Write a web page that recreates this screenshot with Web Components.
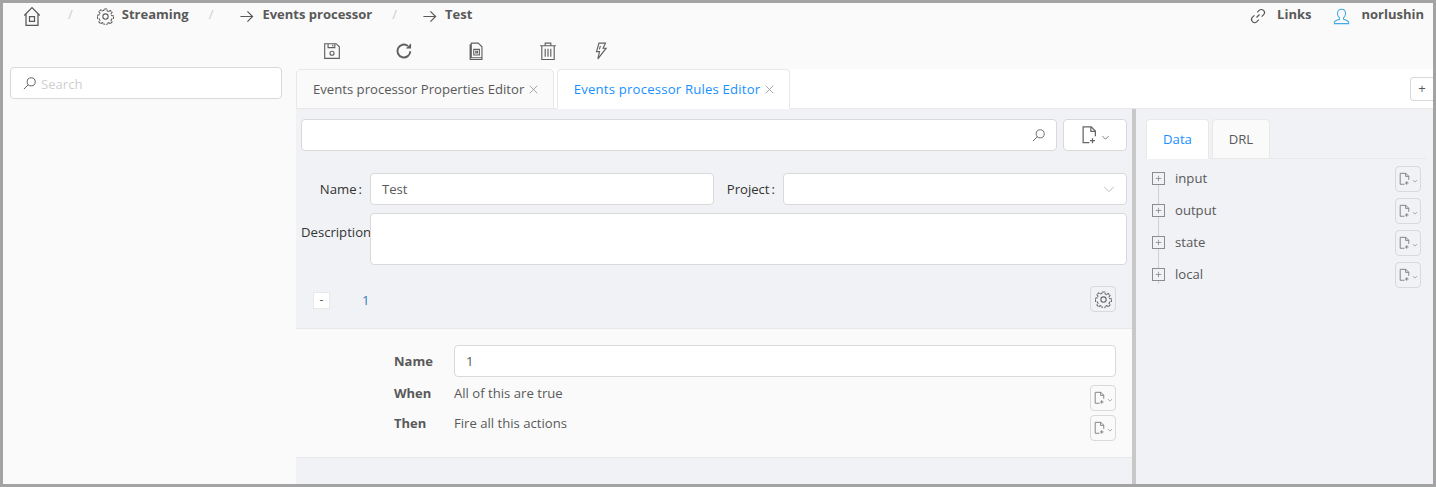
<!DOCTYPE html>
<html>
<head>
<meta charset="utf-8">
<title>Events processor</title>
<style>
    html, body { margin: 0; height: 100%; }
    body { font-family: "Open Sans", "Noto Sans", sans-serif; font-size: 13.13px; color: #595959; }
</style>
</head>
<body>

<app-shell>
    <nav-bar slot="nav"></nav-bar>
    <tool-bar slot="tools"></tool-bar>
    <search-side slot="side"></search-side>
    <tab-strip slot="tabs"></tab-strip>
    <rule-editor slot="editor"></rule-editor>
    <data-panel slot="panel"></data-panel>
</app-shell>

<script>
// shared icons, all drawn on a 16 box
const ICONS = {
    home: `<path d="M1.800 7.600 8 1.300l6.200 6.300M3.200 6.500v9h9.600v-9M6 8.500h4v3.800H6z"/>`,
    gear: `<circle cx="8" cy="8" r="2.500"/><path d="M6.800 1h2.400l.4 1.800 1.400.6 1.500-1 1.700 1.700-1 1.500.6 1.400 1.800.4v2.400l-1.800.4-.6 1.400 1 1.500-1.700 1.700-1.500-1-1.400.6-.4 1.800H6.800l-.4-1.800-1.400-.6-1.500 1-1.700-1.700 1-1.500-.6-1.400-1.800-.4V6.800l1.800-.4.6-1.400-1-1.500 1.700-1.700 1.500 1 1.400-.6z" stroke-dasharray="2.600 .6"/>`,
    arrow: `<path d="M1.500 8h13M9 2.500 14.500 8 9 13.500"/>`,
    save: `<path d="M1.500 1.500h10.200l2.800 2.800v10.200h-13zM4.500 1.500v3.500h6V1.500M8.700 2.500v1.500"/><circle cx="8" cy="10" r="1.800"/>`,
    reload: `<path d="M13.600 8.200A5.700 5.700 0 1 1 11.400 3.500" stroke-width="1.700"/><path d="M14.300 1.200v4.600H9.700z" fill="currentColor" stroke="none"/>`,
    paste: `<path d="M3.800 2.500h-1v13h10.500v-1M3.800 1h6.200l3.300 3.300V14H3.800zM6 6.500h5v5H6zM7.800 8.200h1.500v1.600H7.800z"/>`,
    trash: `<path d="M1 3.300h14M5.500 3V1h5v2M2.500 3.500v12h11v-12M5.500 6v7M8 6v7M10.500 6v7"/>`,
    flash: `<path d="M6.200 1h5.800L9.800 5.500h2.800L5.200 15l1.500-6.500H4z"/><path d="M7.500 3.500 6.500 6.500"/>`,
    link: `<path d="M6.500 9.500 9.500 6.500M7.200 4.300l1.900-1.900a3.100 3.100 0 0 1 4.400 4.400l-1.900 1.900M8.800 11.700l-1.900 1.900a3.100 3.100 0 0 1-4.400-4.400l1.900-1.900"/>`,
    user: `<path d="M8 1.200c2.400 0 3.800 1.700 3.800 4 0 1.700-.8 3.300-1.900 4v1.300c1.900.8 3.900 1.500 4.800 2.500v1.700H1.300V13c.9-1 2.900-1.700 4.800-2.500V9.200c-1.100-.7-1.900-2.300-1.900-4 0-2.300 1.400-4 3.800-4z"/>`,
    search: `<circle cx="9.800" cy="6.200" r="4.300"/><path d="M6.700 9.300 2 14"/>`,
    file: `<path d="M7.500 14H2.500V1.500h6.500l3.300 3.300V9M8.700 1.500v3.500h3.500M10 10.500v4M8 12.500h4"/>`,
    chev: `<path d="M2.500 5.500 8 11l5.500-5.500"/>`,
    close: `<path d="M2.500 2.500l11 11M13.500 2.500l-11 11"/>`,
    plus: `<path d="M8 4v8M4 8h8"/>`
};
const icon = (name, size, extra = "", sw = 1) =>
    `<svg viewBox="0 0 16 16" width="${size}" height="${size}" fill="none" stroke="currentColor" stroke-width="${sw}" style="display:block;flex:none;${extra}">${ICONS[name]}</svg>`;

class AppShell extends HTMLElement {
    constructor() {
        super();
        this.attachShadow({ mode: "open" });
        this.shadowRoot.innerHTML = `
        <style>
            :host { display: block; box-sizing: border-box; width: 1436px; height: 487px; overflow: hidden;
                    border: 3px solid #a3a3a3; background: #fafafa; }
            .grid { display: grid; height: 100%; grid-template-columns: 293px 1fr; grid-template-rows: 30px 36px 40px 1fr; }
            .nav { grid-column: 1 / 3; }
            .side { grid-row: 2 / 5; grid-column: 1; }
            .body { display: flex; min-height: 0; }
            .body ::slotted([slot=editor]) { width: 836px; }
        </style>
        <div class="grid">
            <div class="nav"><slot name="nav"></slot></div>
            <div class="side"><slot name="side"></slot></div>
            <div><slot name="tools"></slot></div>
            <div><slot name="tabs"></slot></div>
            <div class="body"><slot name="editor"></slot><slot name="panel"></slot></div>
        </div>`;
    }
}

class NavBar extends HTMLElement {
    constructor() {
        super();
        this.attachShadow({ mode: "open" });
        this.shadowRoot.innerHTML = `
        <style>
            :host { display: flex; align-items: flex-start; height: 30px; color: #595959; font-weight: 700; font-size: 13px; }
            .crumbs { display: flex; align-items: center; flex: 1; height: 22px; padding-left: 19px; }
            .sep { color: #ccc; font-weight: 400; }
            .item { display: flex; align-items: center; gap: 8px; }
            .right { display: flex; align-items: center; height: 22px; padding-right: 9px; }
        </style>
        <div class="crumbs">
            <span class="item">${icon("home", 20, "margin-top:4px")}</span>
            <span class="sep" style="margin-left:26px">/</span>
            <span class="item" style="margin-left:24px">${icon("gear", 17, "margin-top:4px")}Streaming</span>
            <span class="sep" style="margin-left:20px">/</span>
            <span class="item" style="margin-left:26px">${icon("arrow", 15, "margin-top:4px", 1.3)}Events processor</span>
            <span class="sep" style="margin-left:20px">/</span>
            <span class="item" style="margin-left:25px">${icon("arrow", 15, "margin-top:4px", 1.3)}Test</span>
        </div>
        <div class="right">
            <span class="item" style="gap:11px">${icon("link", 16, "margin-top:4px", 1.2)}Links</span>
            <span class="item" style="gap:11px;margin-left:22px"><span style="color:#45a9e6">${icon("user", 17, "margin-top:4px")}</span>norlushin</span>
        </div>`;
    }
}

class ToolBar extends HTMLElement {
    constructor() {
        super();
        this.attachShadow({ mode: "open" });
        this.shadowRoot.innerHTML = `
        <style>
            :host { display: flex; align-items: center; height: 36px; color: #5f5f5f; padding-left: 27px; }
            span { display: block; width: 72px; }
        </style>
        <span>${icon("save", 18)}</span>
        <span>${icon("reload", 18)}</span>
        <span>${icon("paste", 18)}</span>
        <span style="width:53px">${icon("trash", 18)}</span>
        <span>${icon("flash", 18)}</span>`;
    }
}

class SearchSide extends HTMLElement {
    constructor() {
        super();
        this.attachShadow({ mode: "open" });
        this.shadowRoot.innerHTML = `
        <style>
            :host { display: block; padding: 34px 0 0 7px; }
            .box { box-sizing: border-box; width: 272px; height: 32px; background: #fff; border: 1px solid #d9d9d9; border-radius: 4px;
                   display: flex; align-items: center; gap: 4px; padding-left: 11px; color: #595959; }
            input { border: 0; outline: 0; padding: 0; margin-top: 1px; flex: 1; min-width: 0; font: inherit; background: transparent; }
            input::placeholder { color: #cfcfcf; opacity: 1; }
        </style>
        <div class="box">${icon("search", 15)}<input placeholder="Search"></div>`;
    }
}

class TabStrip extends HTMLElement {
    constructor() {
        super();
        this.attachShadow({ mode: "open" });
        this.shadowRoot.innerHTML = `
        <style>
            :host { display: flex; height: 40px; background: #fff; gap: 3px; align-items: flex-end; position: relative;
                    box-shadow: inset 0 -1px 0 #e8e8e8; }
            .tab { box-sizing: border-box; height: 40px; border: 1px solid #e8e8e8; border-radius: 4px 4px 0 0; background: #fafafa;
                   display: flex; align-items: center; gap: 4px; padding: 0 14px 0 16px; white-space: nowrap; }
            .on { background: #fff; color: #1890ff; border-bottom-color: #fff; padding-left: 15.500px; letter-spacing: .2px; }
            .tab svg { color: #808080; }
            .add { position: absolute; right: 0; top: 8px; box-sizing: border-box; width: 23px; height: 24px; background: #fff;
                   border: 1px solid #d9d9d9; border-right: 0; border-radius: 4px 0 0 4px; text-align: center; line-height: 21px; }
        </style>
        <div class="tab">Events processor Properties Editor${icon("close", 11)}</div>
        <div class="tab on">Events processor Rules Editor${icon("close", 11)}</div>
        <div class="add">+</div>`;
    }
}

// little square dropdown button used through the editor and data tree
class FileButton extends HTMLElement {
    constructor() {
        super();
        this.attachShadow({ mode: "open" });
        this.shadowRoot.innerHTML = `
        <style>
            :host { display: flex; box-sizing: border-box; width: 26px; height: 26px; border: 1px solid #d9d9d9; border-radius: 4px;
                    align-items: center; justify-content: center; color: #777; flex: none; }
        </style>
        ${icon("file", 14)}${icon("chev", 6, "margin-top:3px", 1.6)}`;
    }
}

class RuleEditor extends HTMLElement {
    constructor() {
        super();
        this.attachShadow({ mode: "open" });
        this.shadowRoot.innerHTML = `
        <style>
            :host { display: block; box-sizing: border-box; background: #f0f2f5; color: #595959; }
            .input { box-sizing: border-box; background: #fff; border: 1px solid #d9d9d9; border-radius: 4px; height: 32px;
                     display: flex; align-items: center; padding: 0 11px; }
            .top { display: flex; gap: 6px; padding: 10px 5px 0 5px; }
            .top .input { flex: 1; justify-content: flex-end; color: #666; padding-right: 10px; }
            .new { box-sizing: border-box; width: 64px; height: 32px; background: #fff; border: 1px solid #d9d9d9; border-radius: 4px;
                   display: flex; align-items: center; justify-content: center; gap: 1px; color: #666; }
            .form { display: grid; grid-template-columns: 69px 344px 69px 344px; margin: 22px 0 0 5px; row-gap: 8px; }
            label { display: flex; align-items: center; justify-content: flex-end; color: #333; white-space: nowrap; padding-right: 8px; }
            label i { font-style: normal; margin-left: 2px; }
            label.desc { align-items: flex-start; padding: 10px 0 0; justify-content: flex-start; }
            .area { height: 52px; grid-column: 2 / 5; }
            .select { justify-content: flex-end; color: #b5b5b5; padding-right: 10px; }
            .head { box-sizing: border-box; display: flex; align-items: center; height: 63px; padding: 5px 16px 0 17px; }
            .minus { box-sizing: border-box; width: 17px; height: 17px; margin-top: 2px; background: #fff; border: 1px solid #e8e8e8; font-size: 12px;
                     display: flex; align-items: center; justify-content: center; line-height: 1; }
            .num { color: #3a7ab8; margin: 2px 0 0 32px; flex: 1; }
            .gear { box-sizing: border-box; width: 26px; height: 26px; border: 1px solid #d9d9d9; border-radius: 4px; display: flex;
                    align-items: center; justify-content: center; color: #666; }
            .rule { box-sizing: border-box; height: 130px; background: #fafafa; border-top: 1px solid #e8e8e8; border-bottom: 1px solid #e8e8e8;
                    display: grid; grid-template-columns: 60px 1fr 26px; grid-template-rows: 32px 31px 30px; padding: 16px 16px 0 98px; }
            .rule b { display: flex; align-items: center; font-weight: 700; font-size: 13px; }
            .rule .t { display: flex; align-items: center; }
            .rule .name { grid-column: 2 / 4; }
            .rule file-button { align-self: start; margin-top: 8px; }
            .rule file-button.last { margin-top: 7px; }
        </style>
        <div class="top">
            <div class="input">${icon("search", 15)}</div>
            <div class="new">${icon("file", 20)}${icon("chev", 9, "margin-top:5px", 1.5)}</div>
        </div>
        <div class="form">
            <label>Name<i>:</i></label>
            <div class="input">Test</div>
            <label>Project<i>:</i></label>
            <div class="input select">${icon("chev", 14)}</div>
            <label class="desc">Description</label>
            <div class="input area"></div>
        </div>
        <div class="head">
            <div class="minus">-</div>
            <div class="num">1</div>
            <div class="gear">${icon("gear", 17)}</div>
        </div>
        <div class="rule">
            <b>Name</b><div class="input name">1</div>
            <b>When</b><div class="t">All of this are true</div><file-button></file-button>
            <b>Then</b><div class="t">Fire all this actions</div><file-button class="last"></file-button>
        </div>`;
    }
}

class DataPanel extends HTMLElement {
    constructor() {
        super();
        this.attachShadow({ mode: "open" });
        this.shadowRoot.innerHTML = `
        <style>
            :host { display: block; flex: 1; box-sizing: border-box; background: #f0f2f5; border-left: 4px solid #c8c8c8; padding: 10px 7px 0 10px; }
            .tabs { display: flex; gap: 3px; height: 40px; border-bottom: 1px solid #e8e8e8; box-sizing: border-box; }
            .tabs div { box-sizing: border-box; height: 40px; width: 58px; border: 1px solid #e8e8e8; border-radius: 4px 4px 0 0; background: #fafafa; display: flex; align-items: center; justify-content: center; }
            .tabs .on { width: 63px; background: #fff; color: #1890ff; border-bottom-color: #fff; }
            .tree { padding-top: 4px; }
            .row { display: flex; align-items: center; height: 32px; padding: 0 5px 0 6px; position: relative; }
            .row span { flex: 1; margin: -2px 0 0 10px; }
            .box { box-sizing: border-box; width: 13px; height: 13px; margin-top: -2px; border: 1px solid #8c8c8c; background: #f0f2f5; position: relative; z-index: 1; color: #777; }
            .row + .row::before { content: ""; position: absolute; left: 12px; top: -10px; height: 35px; border-left: 1px solid #d0d0d0; }
        </style>
        <div class="tabs"><div class="on">Data</div><div>DRL</div></div>
        <div class="tree">
            <div class="row"><i class="box">${icon("plus", 11)}</i><span>input</span><file-button></file-button></div>
            <div class="row"><i class="box">${icon("plus", 11)}</i><span>output</span><file-button></file-button></div>
            <div class="row"><i class="box">${icon("plus", 11)}</i><span>state</span><file-button></file-button></div>
            <div class="row"><i class="box">${icon("plus", 11)}</i><span>local</span><file-button></file-button></div>
        </div>`;
    }
}

customElements.define("app-shell", AppShell);
customElements.define("nav-bar", NavBar);
customElements.define("tool-bar", ToolBar);
customElements.define("search-side", SearchSide);
customElements.define("tab-strip", TabStrip);
customElements.define("file-button", FileButton);
customElements.define("rule-editor", RuleEditor);
customElements.define("data-panel", DataPanel);
</script>
</body>
</html>
